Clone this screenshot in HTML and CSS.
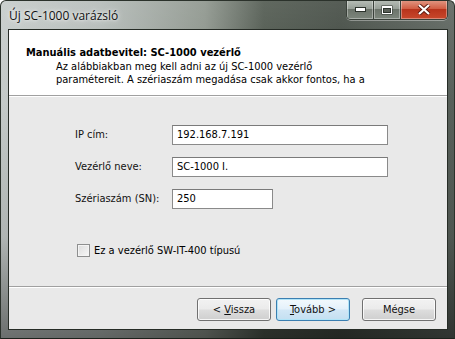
FILE: index.html
```html
<!DOCTYPE html>
<html lang="hu">
<head>
  <meta charset="UTF-8" />
  <link rel="stylesheet" href="styles.css">
</head>
<body>

  <div class="window">
    <div class="titlebar">
      <div class="title">Új SC-1000 varázsló</div>
      <div class="controls">
        <div class="ctl ctl-min">
          <svg width="11" height="5" viewBox="0 0 11 5"><rect x="0.5" y="0.5" width="10" height="4" fill="#fff" stroke="#2c332c"/></svg>
        </div>
        <div class="ctl ctl-max">
          <svg width="12" height="10" viewBox="0 0 12 10"><rect x="0.5" y="0.5" width="11" height="9" fill="#2c332c"/><rect x="1.5" y="1.5" width="9" height="7" fill="none" stroke="#fff" stroke-width="1"/><rect x="1.5" y="1.5" width="9" height="1.5" fill="#fff"/><rect x="3" y="4" width="6" height="3" fill="#5a6058"/></svg>
        </div>
        <div class="ctl ctl-close">
          <svg width="14" height="11" viewBox="0 0 14 11"><path d="M2 1 L12 10 M12 1 L2 10" stroke="#5a1a10" stroke-width="4"/><path d="M2 1 L12 10 M12 1 L2 10" stroke="#fff" stroke-width="2.2"/></svg>
        </div>
      </div>
    </div>

    <div class="client">
      <div class="header">
        <div class="header-title">Manuális adatbevitel: SC-1000 vezérlő</div>
        <div class="header-desc">Az alábbiakban meg kell adni az új SC-1000 vezérlő<br>paramétereit. A szériaszám megadása csak akkor fontos, ha a</div>
      </div>

      <div class="content">
        <div class="form">
          <label class="field-label">IP cím:</label>
          <div class="input input-wide">192.168.7.191</div>
          <label class="field-label">Vezérlő neve:</label>
          <div class="input input-wide">SC-1000 I.</div>
          <label class="field-label">Szériaszám (SN):</label>
          <div class="input input-short">250</div>
        </div>
        <div class="check-row">
          <span class="checkbox"></span>
          <span>Ez a vezérlő SW-IT-400 típusú</span>
        </div>
      </div>

      <div class="footer">
        <div class="btn"><span>&lt; <u>V</u>issza</span></div>
        <div class="btn btn-default"><span><u>T</u>ovább &gt;</span></div>
        <div class="btn btn-cancel"><span>Mégse</span></div>
      </div>
    </div>
  </div>

</body>
</html>
```

FILE: styles.css
```css
body {
  margin: 0;
  padding: 0;
  background: #ffffff;
  font-family: "DejaVu Sans Condensed", "DejaVu Sans", sans-serif;
  font-size: 11px;
  color: #000;
}

.window {
  width: 455px;
  height: 339px;
  box-sizing: border-box;
  padding: 0 6px 8px 7px;
  display: flex;
  flex-direction: column;
  border-radius: 6px 6px 0 0;
  border: 1px solid #2b322b;
  border-bottom-color: #1c221c;
  background:
    linear-gradient(to bottom, rgba(255,255,255,0.12), rgba(0,0,0,0) 30%, rgba(0,0,0,0.1) 70%, rgba(0,0,0,0.45)),
    linear-gradient(to right, #c4cac8 0%, #b2b9b6 22%, #8a9289 45%, #4b544a 58%, #3f473f 75%, #58605a 100%);
  overflow: hidden;
}

/* TITLE BAR */
.titlebar {
  height: 28px;
  display: flex;
  align-items: flex-start;
}

.title {
  font-family: "Open Sans", "Noto Sans", sans-serif;
  font-size: 12px;
  color: #111;
  padding: 6px 0 0 1px;
  text-shadow: 0 0 6px rgba(255,255,255,0.9), 0 0 3px rgba(255,255,255,0.8);
}

.controls {
  margin-left: auto;
  display: flex;
  margin-top: -1px;
  border: 1px solid #3a413a;
  border-top: none;
  border-radius: 0 0 5px 5px;
  overflow: hidden;
  box-shadow: 0 1px 0 rgba(255,255,255,0.35);
}

.ctl {
  height: 19px;
  display: flex;
  align-items: center;
  justify-content: center;
  box-shadow: inset 0 0 0 1px rgba(255,255,255,0.35);
}

.ctl-min,
.ctl-max {
  width: 26px;
  background: linear-gradient(to bottom, #b8bfb8 0%, #98a098 45%, #6c746b 50%, #7d867c 100%);
  border-right: 1px solid #3a413a;
}

.ctl-close {
  width: 46px;
  background: linear-gradient(to bottom, #e29a86 0%, #d25f45 45%, #b8341c 50%, #c8482c 100%);
}

/* CLIENT AREA */
.client {
  flex: 1;
  display: flex;
  flex-direction: column;
  border: 1px solid #262c26;
  background: #e9e9e9;
}

.header {
  height: 66px;
  box-sizing: border-box;
  background: #fff;
  border-bottom: 1px solid #a0a0a0;
  padding: 16px 0 0 17px;
}

.header-title {
  font-weight: bold;
  line-height: 14px;
}

.header-desc {
  margin: 0 0 0 30px;
  line-height: 13px;
}

.content {
  flex: 1;
  border-top: 1px solid #fff;
  border-bottom: 1px solid #a0a0a0;
  padding: 28px 0 0 66px;
}

.form {
  display: grid;
  grid-template-columns: 97px auto;
  row-gap: 12px;
  align-items: center;
}

.field-label {
  line-height: 20px;
  color: #111;
}

.input {
  height: 20px;
  box-sizing: border-box;
  border: 1px solid #8a8a8a;
  border-top-color: #7a7a7a;
  background: #fff;
  padding: 0 4px;
  line-height: 18px;
}

.input-wide {
  width: 216px;
}

.input-short {
  width: 101px;
}

.check-row {
  display: flex;
  align-items: center;
  gap: 4px;
  margin: 35px 0 0 2px;
}

.checkbox {
  width: 11px;
  height: 11px;
  border: 1px solid #8e8f8f;
  background: linear-gradient(135deg, #dcdcdc, #f8f8f8);
  box-shadow: inset 0 0 0 1px #f4f4f4;
}

/* BUTTONS */
.footer {
  height: 42px;
  box-sizing: border-box;
  border-top: 1px solid #fff;
  display: flex;
  justify-content: flex-end;
  align-items: flex-start;
  padding: 10px 11px 0 0;
}

.btn {
  width: 74px;
  height: 23px;
  box-sizing: border-box;
  border: 1px solid #707070;
  border-radius: 3px;
  background: linear-gradient(to bottom, #f2f2f2 0%, #ebebeb 48%, #dddddd 52%, #cfcfcf 100%);
  box-shadow: inset 0 0 0 1px rgba(255,255,255,0.8);
  display: flex;
  align-items: center;
  justify-content: center;
  color: #111;
}

.btn-default {
  margin-left: 5px;
  border-color: #3c7fb1;
  background: linear-gradient(to bottom, #f3f9fd 0%, #e4f1fb 48%, #d2e7f6 52%, #c4dff1 100%);
  box-shadow: inset 0 0 0 1px #b0e4f8;
}

.btn-cancel {
  margin-left: 12px;
}
```
